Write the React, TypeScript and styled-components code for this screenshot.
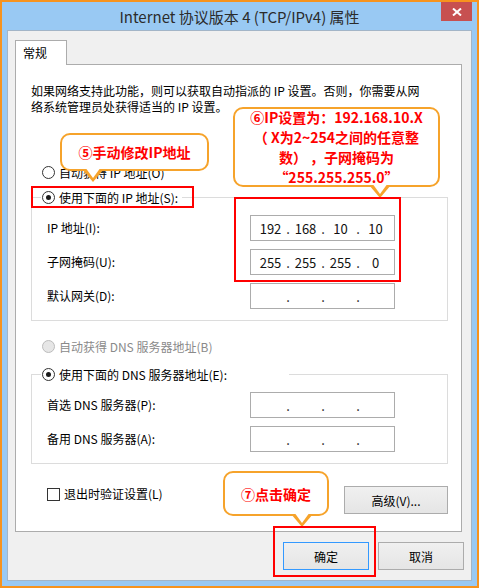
import React from "react";
import styled, { createGlobalStyle } from "styled-components";

const GlobalStyle = createGlobalStyle`
  body {
    margin: 0;
    background: #fff;
    font-family: "Noto Sans CJK SC", "Noto Sans", sans-serif;
    text-spacing-trim: space-all;
  }
`;

const IpField: React.FC<{ parts?: string[] }> = ({ parts = ["", "", "", ""] }) => (
  <IpBox>
    {parts.map((p, i) => (
      <React.Fragment key={i}>
        {i > 0 && <IpDot>.</IpDot>}
        <IpPart>{p}</IpPart>
      </React.Fragment>
    ))}
  </IpBox>
);

const App: React.FC = () => {
  return (
    <>
      <GlobalStyle />
      <Window>
        <TitleBar>
          <Title>Internet 协议版本 4 (TCP/IPv4) 属性</Title>
          <CloseButton>
            <svg width="10" height="8" viewBox="0 0 10 8">
              <path d="M1 0.5 L9 7.5 M9 0.5 L1 7.5" stroke="#fff" strokeWidth="2" />
            </svg>
          </CloseButton>
        </TitleBar>

        <Panel>
          <Tab>常规</Tab>
          <TabBody>
            <Description>
              如果网络支持此功能，则可以获取自动指派的 IP 设置。否则，你需要从网
              <br />
              络系统管理员处获得适当的 IP 设置。
            </Description>

            <RadioRow $gap={47}>
              <Radio />
              自动获得 IP 地址(O)
            </RadioRow>

            <GroupBox $gap={15}>
              <Legend>
                <Radio $checked />
                使用下面的 IP 地址(S):
              </Legend>
              <Fields>
                <FieldLabel>IP 地址(I):</FieldLabel>
                <IpField parts={["192", "168", "10", "10"]} />
                <FieldLabel>子网掩码(U):</FieldLabel>
                <IpField parts={["255", "255", "255", "0"]} />
                <FieldLabel>默认网关(D):</FieldLabel>
                <IpField />
              </Fields>
            </GroupBox>

            <RadioRow $gap={15} $disabled>
              <Radio $disabled />
              自动获得 DNS 服务器地址(B)
            </RadioRow>

            <GroupBox $gap={18}>
              <Legend $width={248}>
                <Radio $checked />
                使用下面的 DNS 服务器地址(E):
              </Legend>
              <Fields>
                <FieldLabel>首选 DNS 服务器(P):</FieldLabel>
                <IpField />
                <FieldLabel>备用 DNS 服务器(A):</FieldLabel>
                <IpField />
              </Fields>
            </GroupBox>

            <BottomRow>
              <CheckRow>
                <CheckBox />
                退出时验证设置(L)
              </CheckRow>
              <Button $width={104}>高级(V)...</Button>
            </BottomRow>
          </TabBody>

          <DialogButtons>
            <Button $width={86} $focused>
              确定
            </Button>
            <Button $width={86}>取消</Button>
          </DialogButtons>
        </Panel>

        <Callout $x={60} $y={133} $w={149} $h={38} $tail={93}>
          <CalloutLine>⑤手动修改IP地址</CalloutLine>
        </Callout>
        <Callout $x={233} $y={107} $w={207} $h={80} $tail={380}>
          <CalloutLine>⑥IP设置为：192.168.10.X</CalloutLine>
          <CalloutLine>（ X为2~254之间的任意整</CalloutLine>
          <CalloutLine>数）&thinsp;，子网掩码为</CalloutLine>
          <CalloutLine>“255.255.255.0”</CalloutLine>
        </Callout>
        <Callout $x={223} $y={471} $w={106} $h={45} $tail={302}>
          <CalloutLine>⑦点击确定</CalloutLine>
        </Callout>

        <Highlight $x={31} $y={186} $w={163} $h={22} />
        <Highlight $x={234} $y={197} $w={167} $h={85} />
        <Highlight $x={273} $y={526} $w={103} $h={51} />
      </Window>
    </>
  );
};

export default App;

const Window = styled.div`
  position: relative;
  box-sizing: border-box;
  width: 479px;
  height: 588px;
  border: 2px solid #f7931e;
  background: #99c9f3;
  display: flex;
  flex-direction: column;
`;

const TitleBar = styled.div`
  position: relative;
  height: 28px;
  display: flex;
  align-items: center;
  justify-content: center;
`;

const Title = styled.div`
  font-size: 15px;
  color: #2b2b2b;
  margin-top: 1px;
`;

const CloseButton = styled.div`
  position: absolute;
  top: 0;
  right: 5px;
  width: 31px;
  height: 19px;
  background: #c75050;
  display: flex;
  align-items: center;
  justify-content: center;
`;

const Panel = styled.div`
  flex: 1;
  margin: 0 5px 5px;
  border: 1px solid #a3b5c7;
  background: #f0f0f0;
  padding: 9px 7px 0 7px;
  display: flex;
  flex-direction: column;
  align-items: flex-start;
`;

const Tab = styled.div`
  position: relative;
  z-index: 1;
  box-sizing: border-box;
  width: 52px;
  height: 25px;
  margin-bottom: -1px;
  padding-left: 7px;
  border: 1px solid #acacac;
  border-bottom: none;
  background: #fff;
  font-size: 12px;
  line-height: 23px;
  color: #000;
`;

const TabBody = styled.div`
  align-self: stretch;
  margin-right: 2px;
  border: 1px solid #acacac;
  background: #fff;
  padding: 18px 0 17px;
  display: flex;
  flex-direction: column;
  font-size: 12px;
  color: #000;
`;

const Description = styled.div`
  padding-left: 15px;
  line-height: 16px;
  white-space: nowrap;
`;

const RadioRow = styled.div<{ $gap: number; $disabled?: boolean }>`
  margin-top: ${(p) => p.$gap}px;
  height: 20px;
  padding-left: 26px;
  display: flex;
  align-items: center;
  gap: 4px;
  color: ${(p) => (p.$disabled ? "#8a8a8a" : "#000")};
`;

const Radio = styled.span<{ $checked?: boolean; $disabled?: boolean }>`
  position: relative;
  box-sizing: border-box;
  width: 13px;
  height: 13px;
  flex: none;
  border-radius: 50%;
  border: 1px solid ${(p) => (p.$disabled ? "#bcbcbc" : "#333")};
  background: ${(p) => (p.$disabled ? "#e6e6e6" : "#fff")};

  &::after {
    content: "";
    display: ${(p) => (p.$checked ? "block" : "none")};
    position: absolute;
    left: 3px;
    top: 3px;
    width: 5px;
    height: 5px;
    border-radius: 50%;
    background: #1a1a1a;
  }
`;

const GroupBox = styled.div<{ $gap: number }>`
  margin: ${(p) => p.$gap}px 13px 0 15px;
  border: 1px solid #dcdcdc;
  display: flex;
  flex-direction: column;
  align-items: flex-start;
`;

const Legend = styled.div<{ $width?: number }>`
  box-sizing: border-box;
  margin: -11px 0 0 9px;
  width: ${(p) => (p.$width ? `${p.$width}px` : "auto")};
  height: 20px;
  padding: 0 4px 0 1px;
  background: #fff;
  display: flex;
  align-items: center;
  gap: 4px;
`;

const Fields = styled.div`
  display: grid;
  grid-template-columns: 203px 145px;
  row-gap: 8px;
  align-items: center;
  padding: 8px 0 11px 15px;
`;

const FieldLabel = styled.div`
  line-height: 16px;
`;

const IpBox = styled.div`
  box-sizing: border-box;
  width: 145px;
  height: 26px;
  border: 1px solid #acacac;
  padding: 0 2px 0 4px;
  display: flex;
  align-items: center;
  font-size: 13px;
  color: #111;
`;

const IpPart = styled.span`
  width: 31px;
  text-align: center;
`;

const IpDot = styled.span`
  width: 4px;
  text-align: center;
`;

const BottomRow = styled.div`
  margin: 22px 13px 0 31px;
  display: flex;
  justify-content: space-between;
  align-items: flex-start;
`;

const CheckRow = styled.div`
  height: 16px;
  line-height: 16px;
  display: flex;
  align-items: center;
  gap: 4px;
`;

const CheckBox = styled.span`
  box-sizing: border-box;
  width: 13px;
  height: 13px;
  border: 1px solid #333;
  background: #fff;
`;

const Button = styled.div<{ $width: number; $focused?: boolean }>`
  box-sizing: border-box;
  width: ${(p) => p.$width}px;
  height: 28px;
  border: 1px solid ${(p) => (p.$focused ? "#3399ff" : "#acacac")};
  background: linear-gradient(#f0f0f0, #e5e5e5);
  display: flex;
  align-items: center;
  justify-content: center;
  font-size: 12px;
  color: #000;
`;

const DialogButtons = styled.div`
  align-self: stretch;
  margin-top: 10px;
  display: flex;
  justify-content: flex-end;
  gap: 9px;
`;

const Callout = styled.div<{ $x: number; $y: number; $w: number; $h: number; $tail: number }>`
  position: absolute;
  left: ${(p) => p.$x - 2}px;
  top: ${(p) => p.$y - 2}px;
  width: ${(p) => p.$w}px;
  height: ${(p) => p.$h}px;
  box-sizing: border-box;
  border: 2px solid #f6a32b;
  border-radius: 10px;
  background: #fff;
  color: #ff0000;
  font-weight: 700;
  font-size: 14px;
  line-height: 20px;
  display: flex;
  flex-direction: column;
  align-items: center;
  justify-content: center;

  &::before {
    content: "";
    position: absolute;
    top: 100%;
    left: ${(p) => p.$tail - p.$x - 13}px;
    border-left: 11px solid transparent;
    border-right: 11px solid transparent;
    border-top: 13px solid #f6a32b;
  }

  &::after {
    content: "";
    position: absolute;
    top: calc(100% - 2px);
    left: ${(p) => p.$tail - p.$x - 10}px;
    border-left: 8px solid transparent;
    border-right: 8px solid transparent;
    border-top: 11px solid #fff;
  }
`;

const CalloutLine = styled.div`
  white-space: pre;
  text-align: center;
`;

const Highlight = styled.div<{ $x: number; $y: number; $w: number; $h: number }>`
  position: absolute;
  left: ${(p) => p.$x - 2}px;
  top: ${(p) => p.$y - 2}px;
  width: ${(p) => p.$w}px;
  height: ${(p) => p.$h}px;
  box-sizing: border-box;
  border: 2px solid #ff0000;
  pointer-events: none;
`;
